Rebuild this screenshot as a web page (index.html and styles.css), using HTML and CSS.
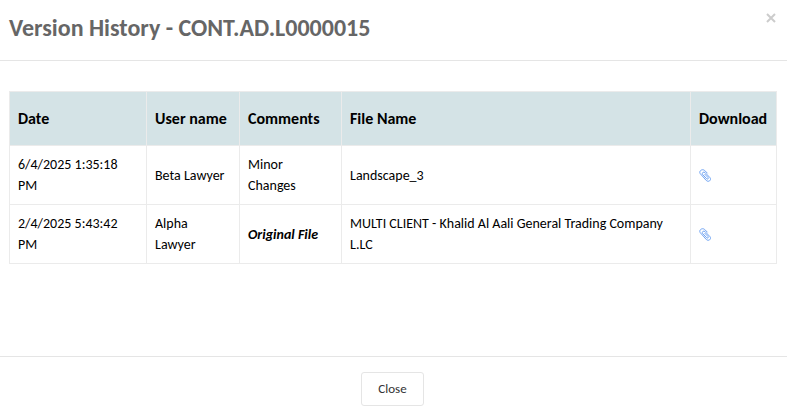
FILE: index.html
```html
<!DOCTYPE html>
<html lang="en">
<head>
  <meta charset="UTF-8">
  <title>Version History</title>
  <link rel="stylesheet" href="styles.css">
</head>
<body>
  <div class="modal">
    <div class="modal-header">
      <h1 class="modal-title">Version History - CONT.AD.L0000015</h1>
      <button type="button" class="close" aria-label="Dismiss">
        <svg width="10" height="10" viewBox="0 0 10 10"><path d="M1 1l8 8M9 1L1 9"/></svg>
      </button>
    </div>

    <div class="modal-body">
      <table class="history">
        <colgroup>
          <col class="col-date">
          <col class="col-user">
          <col class="col-comments">
          <col>
          <col class="col-download">
        </colgroup>
        <thead>
          <tr>
            <th>Date</th>
            <th>User name</th>
            <th>Comments</th>
            <th>File Name</th>
            <th>Download</th>
          </tr>
        </thead>
        <tbody>
          <tr>
            <td>6/4/2025 1:35:18 PM</td>
            <td>Beta Lawyer</td>
            <td>Minor Changes</td>
            <td>Landscape_3</td>
            <td>
              <a href="#" class="attachment" aria-label="Download Landscape_3">
                <svg width="12" height="13" viewBox="0 0 12 13"><path d="M8.500 4.300L5.600 1.400C3.200-.500-.500 2 1.200 4.600L7.300 11.500C9.500 13.500 12.800 11.200 11 8.700L6 3.500C4.500 2.300 2.500 4 3.600 5.500L7.700 9.800C8.800 10.600 9.800 9.500 9 8.500L5.500 5"/></svg>
              </a>
            </td>
          </tr>
          <tr>
            <td>2/4/2025 5:43:42 PM</td>
            <td>Alpha Lawyer</td>
            <td><strong class="original">Original File</strong></td>
            <td>MULTI CLIENT - Khalid Al Aali General Trading Company L.LC</td>
            <td>
              <a href="#" class="attachment" aria-label="Download original file">
                <svg width="12" height="13" viewBox="0 0 12 13"><path d="M8.500 4.300L5.600 1.400C3.200-.500-.500 2 1.200 4.600L7.300 11.500C9.500 13.500 12.800 11.200 11 8.700L6 3.500C4.500 2.300 2.500 4 3.600 5.500L7.700 9.800C8.800 10.600 9.800 9.500 9 8.500L5.500 5"/></svg>
              </a>
            </td>
          </tr>
        </tbody>
      </table>
    </div>

    <div class="modal-footer">
      <button type="button" class="btn">Close</button>
    </div>
  </div>
</body>
</html>
```

FILE: styles.css
```css
* {
  box-sizing: border-box;
}
body {
  margin: 0;
  background: #fff;
  color: #000;
  font-family: Calibri, Carlito, Lato, sans-serif;
  font-size: 14px;
  line-height: 21px;
}
.modal {
  display: flex;
  flex-direction: column;
  min-height: 100vh;
}

/* Header */
.modal-header {
  display: flex;
  justify-content: space-between;
  align-items: flex-start;
  padding: 12px 10px 16px 9px;
  border-bottom: 1px solid #e5e5e5;
}
.modal-title {
  margin: 0;
  font-size: 24px;
  line-height: 32px;
  color: #666;
}
.close {
  display: flex;
  padding: 1px;
  border: 0;
  background: none;
  cursor: pointer;
}
.close svg {
  fill: none;
  stroke: #ccc;
  stroke-width: 2;
}

/* Table */
.modal-body {
  flex: 1;
  padding: 30px 10px 30px 9px;
}
.history {
  width: 100%;
  table-layout: fixed;
  border-collapse: collapse;
}
.history th,
.history td {
  padding: 8px;
  border: 1px solid #ebebeb;
  text-align: left;
  vertical-align: middle;
}
.history th {
  padding: 16px 8px;
  background: #d4e3e6;
  font-size: 16px;
  white-space: nowrap;
}
.col-date {
  width: 137px;
}
.col-user {
  width: 93px;
}
.col-comments {
  width: 102px;
}
.col-download {
  width: 86px;
}
.original {
  font-style: italic;
}
.attachment svg {
  display: block;
  fill: none;
  stroke: #6fa3f2;
  stroke-width: 1;
}

/* Footer */
.modal-footer {
  padding: 15px 12px 11px 10px;
  border-top: 1px solid #e5e5e5;
  text-align: center;
}
.btn {
  padding: 6px 16px;
  border: 1px solid #e5e5e5;
  border-radius: 3px;
  background: #fff;
  color: #333;
  font-family: inherit;
  font-size: 13px;
  line-height: 20px;
  cursor: pointer;
}
```
